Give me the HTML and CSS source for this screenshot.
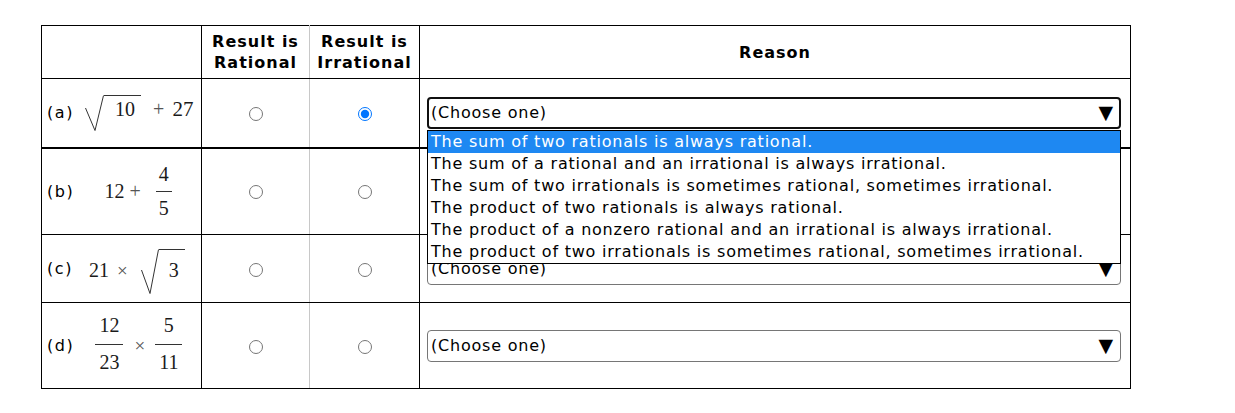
FILE: index.html
```html
<!DOCTYPE html>
<html>
<head>
<meta charset="utf-8">
<link rel="stylesheet" href="styles.css">
</head>
<body>
<div class="page">
  <table class="grid">
    <colgroup>
      <col class="col-expr">
      <col class="col-rat">
      <col class="col-irr">
      <col class="col-reason">
    </colgroup>
    <thead>
      <tr class="head">
        <th class="c-expr"></th>
        <th class="c-rat">Result is<br>Rational</th>
        <th class="c-irr">Result is<br>Irrational</th>
        <th class="c-reason">Reason</th>
      </tr>
    </thead>
    <tbody>
      <tr class="row row-a">
        <td class="c-expr">
          <div class="expr">
            <span class="lbl">(a)</span>
            <span class="math math-a">
              <span class="radical rad-a">
                <svg class="rad-sign" width="19" height="36" viewBox="0 0 19 36"><path d="M0.5 13 L10 35.5 L18.5 0.5" fill="none" stroke="#333" stroke-width="1"/></svg>
                <span class="radicand">10</span>
              </span>
              <span class="op plus-a">+</span>
              <span class="num-a">27</span>
            </span>
          </div>
        </td>
        <td class="c-rat"><input type="radio" name="ra" class="radio"></td>
        <td class="c-irr"><input type="radio" name="ra" class="radio" checked></td>
        <td class="c-reason">
          <div class="reason-wrap">
            <div class="select select-open"><span class="sel-text">(Choose one)</span><span class="sel-arrow">▼</span></div>
            <ul class="listbox">
              <li class="opt opt-active">The sum of two rationals is always rational.</li>
              <li class="opt">The sum of a rational and an irrational is always irrational.</li>
              <li class="opt">The sum of two irrationals is sometimes rational, sometimes irrational.</li>
              <li class="opt">The product of two rationals is always rational.</li>
              <li class="opt">The product of a nonzero rational and an irrational is always irrational.</li>
              <li class="opt">The product of two irrationals is sometimes rational, sometimes irrational.</li>
            </ul>
          </div>
        </td>
      </tr>
      <tr class="row row-b">
        <td class="c-expr">
          <div class="expr">
            <span class="lbl">(b)</span>
            <span class="math math-b">
              <span class="n">12</span>
              <span class="op plus-b">+</span>
              <span class="frac frac-b"><span class="fnum">4</span><span class="fden">5</span></span>
            </span>
          </div>
        </td>
        <td class="c-rat"><input type="radio" name="rb" class="radio"></td>
        <td class="c-irr"><input type="radio" name="rb" class="radio"></td>
        <td class="c-reason">
          <div class="select"><span class="sel-text">(Choose one)</span><span class="sel-arrow">▼</span></div>
        </td>
      </tr>
      <tr class="row row-c">
        <td class="c-expr">
          <div class="expr">
            <span class="lbl">(c)</span>
            <span class="math math-c">
              <span class="n">21</span>
              <span class="op times-c">×</span>
              <span class="radical rad-c">
                <svg class="rad-sign" width="18" height="45" viewBox="0 0 18 45"><path d="M0.5 21 L9 44.5 L17.5 0.5" fill="none" stroke="#333" stroke-width="1"/></svg>
                <span class="radicand">3</span>
              </span>
            </span>
          </div>
        </td>
        <td class="c-rat"><input type="radio" name="rc" class="radio"></td>
        <td class="c-irr"><input type="radio" name="rc" class="radio"></td>
        <td class="c-reason">
          <div class="select"><span class="sel-text">(Choose one)</span><span class="sel-arrow">▼</span></div>
        </td>
      </tr>
      <tr class="row row-d">
        <td class="c-expr">
          <div class="expr">
            <span class="lbl">(d)</span>
            <span class="math math-d">
              <span class="frac frac-wide"><span class="fnum">12</span><span class="fden">23</span></span>
              <span class="op times-d">×</span>
              <span class="frac frac-wide"><span class="fnum">5</span><span class="fden">11</span></span>
            </span>
          </div>
        </td>
        <td class="c-rat"><input type="radio" name="rd" class="radio"></td>
        <td class="c-irr"><input type="radio" name="rd" class="radio"></td>
        <td class="c-reason">
          <div class="select"><span class="sel-text">(Choose one)</span><span class="sel-arrow">▼</span></div>
        </td>
      </tr>
    </tbody>
  </table>
</div>
</body>
</html>
```

FILE: styles.css
```css
* { box-sizing: border-box; }

body {
  margin: 0;
  background: #ffffff;
  font-family: "DejaVu Sans", Verdana, sans-serif;
  font-size: 16px;
  letter-spacing: 0.78px;
  color: #000;
}

.page {
  padding: 25px 0 0 41px;
}

.grid {
  border-collapse: collapse;
  table-layout: fixed;
  width: 1089px;
}

.col-expr { width: 160px; }
.col-rat { width: 108px; }
.col-irr { width: 110px; }
.col-reason { width: 711px; }

.grid th,
.grid td {
  border: 1px solid #000;
  padding: 0;
  vertical-align: middle;
}

.grid th.c-rat,
.grid td.c-rat { border-right: 1px solid #c8c8c8; }
.grid th.c-irr,
.grid td.c-irr { border-left: 1px solid #c8c8c8; }

.head { height: 53px; }
.head th {
  font-weight: bold;
  font-size: 16px;
  line-height: 21px;
  letter-spacing: 1px;
  text-align: center;
}

.row-a { height: 69px; }
.row-a td { border-bottom: 2px solid #000; }
.row-b { height: 87px; }
.row-c { height: 68px; }
.row-d { height: 86px; }

.c-rat, .c-irr { text-align: center; }

.radio {
  margin: 0;
  width: 14px;
  height: 14px;
  vertical-align: middle;
}

/* expression column */
.expr {
  display: flex;
  align-items: center;
  padding-left: 5px;
}

.lbl {
  font-size: 16px;
  line-height: 19px;
  letter-spacing: 1.6px;
}

.math {
  display: inline-flex;
  align-items: baseline;
  font-family: "Liberation Serif", "Times New Roman", serif;
  font-size: 20px;
  line-height: 20px;
  letter-spacing: 0;
  color: #1a1a1a;
}

.math-a { margin-left: 11px; }
.math-b { margin-left: 30px; align-items: center; }
.math-c { margin-left: 16px; margin-top: 6px; }
.math-d { margin-left: 21px; align-items: center; }

.op { color: #555; }

.plus-a { margin-left: 12px; }
.num-a { margin-left: 8px; font-size: 21px; }
.plus-b { margin-left: 5px; }
.times-c { margin-left: 8px; font-size: 19px; }
.times-d { margin: 0 10px 0 11px; font-size: 19px; }

.radical {
  display: inline-flex;
  align-items: flex-start;
}

.rad-sign { display: block; flex: none; }

.radicand {
  align-self: baseline;
  border-top: 1px solid #333;
  line-height: 20px;
}

.rad-a .radicand { padding: 3px 6px 0 11px; }
.rad-c .radicand { padding: 10px 6px 0 10px; }
.rad-c { margin-left: 13px; }

.frac {
  display: inline-flex;
  flex-direction: column;
  align-items: stretch;
  text-align: center;
}

.fnum {
  line-height: 20px;
  padding: 0 3px 7px;
  border-bottom: 1px solid #333;
}

.fden {
  line-height: 20px;
  padding: 6px 3px 0;
}

.frac-b { margin-left: 15px; }
.frac-wide { margin-top: -4px; }
.frac-wide .fnum,
.frac-wide .fden { padding-left: 4px; padding-right: 4px; }
.frac-wide .fnum { padding-bottom: 9px; }
.frac-wide .fden { padding-top: 7px; }

/* reason column */
.grid td.c-reason { padding: 0 9px 0 7px; }

.reason-wrap { position: relative; }

.select {
  display: flex;
  align-items: center;
  justify-content: space-between;
  height: 32px;
  border: 1px solid #767676;
  border-radius: 4px;
  padding: 0 7px 0 3px;
  background: #fff;
  font-size: 16px;
}

.select-open {
  border: 2px solid #101010;
  height: 32px;
  padding-left: 2px;
  padding-right: 6px;
}

.sel-text { line-height: 20px; }

.sel-arrow {
  font-size: 19px;
  line-height: 19px;
  letter-spacing: 0;
  color: #000;
}

.listbox {
  position: absolute;
  left: 0;
  right: 0;
  top: 33px;
  margin: 0;
  padding: 0;
  list-style: none;
  border: 1px solid #000;
  background: #fff;
  z-index: 5;
}

.opt {
  height: 22px;
  line-height: 22px;
  padding: 0 3px;
  white-space: nowrap;
  font-size: 16px;
  color: #000;
}

.opt-active {
  background: #1e88f2;
  color: #fff;
}
```
